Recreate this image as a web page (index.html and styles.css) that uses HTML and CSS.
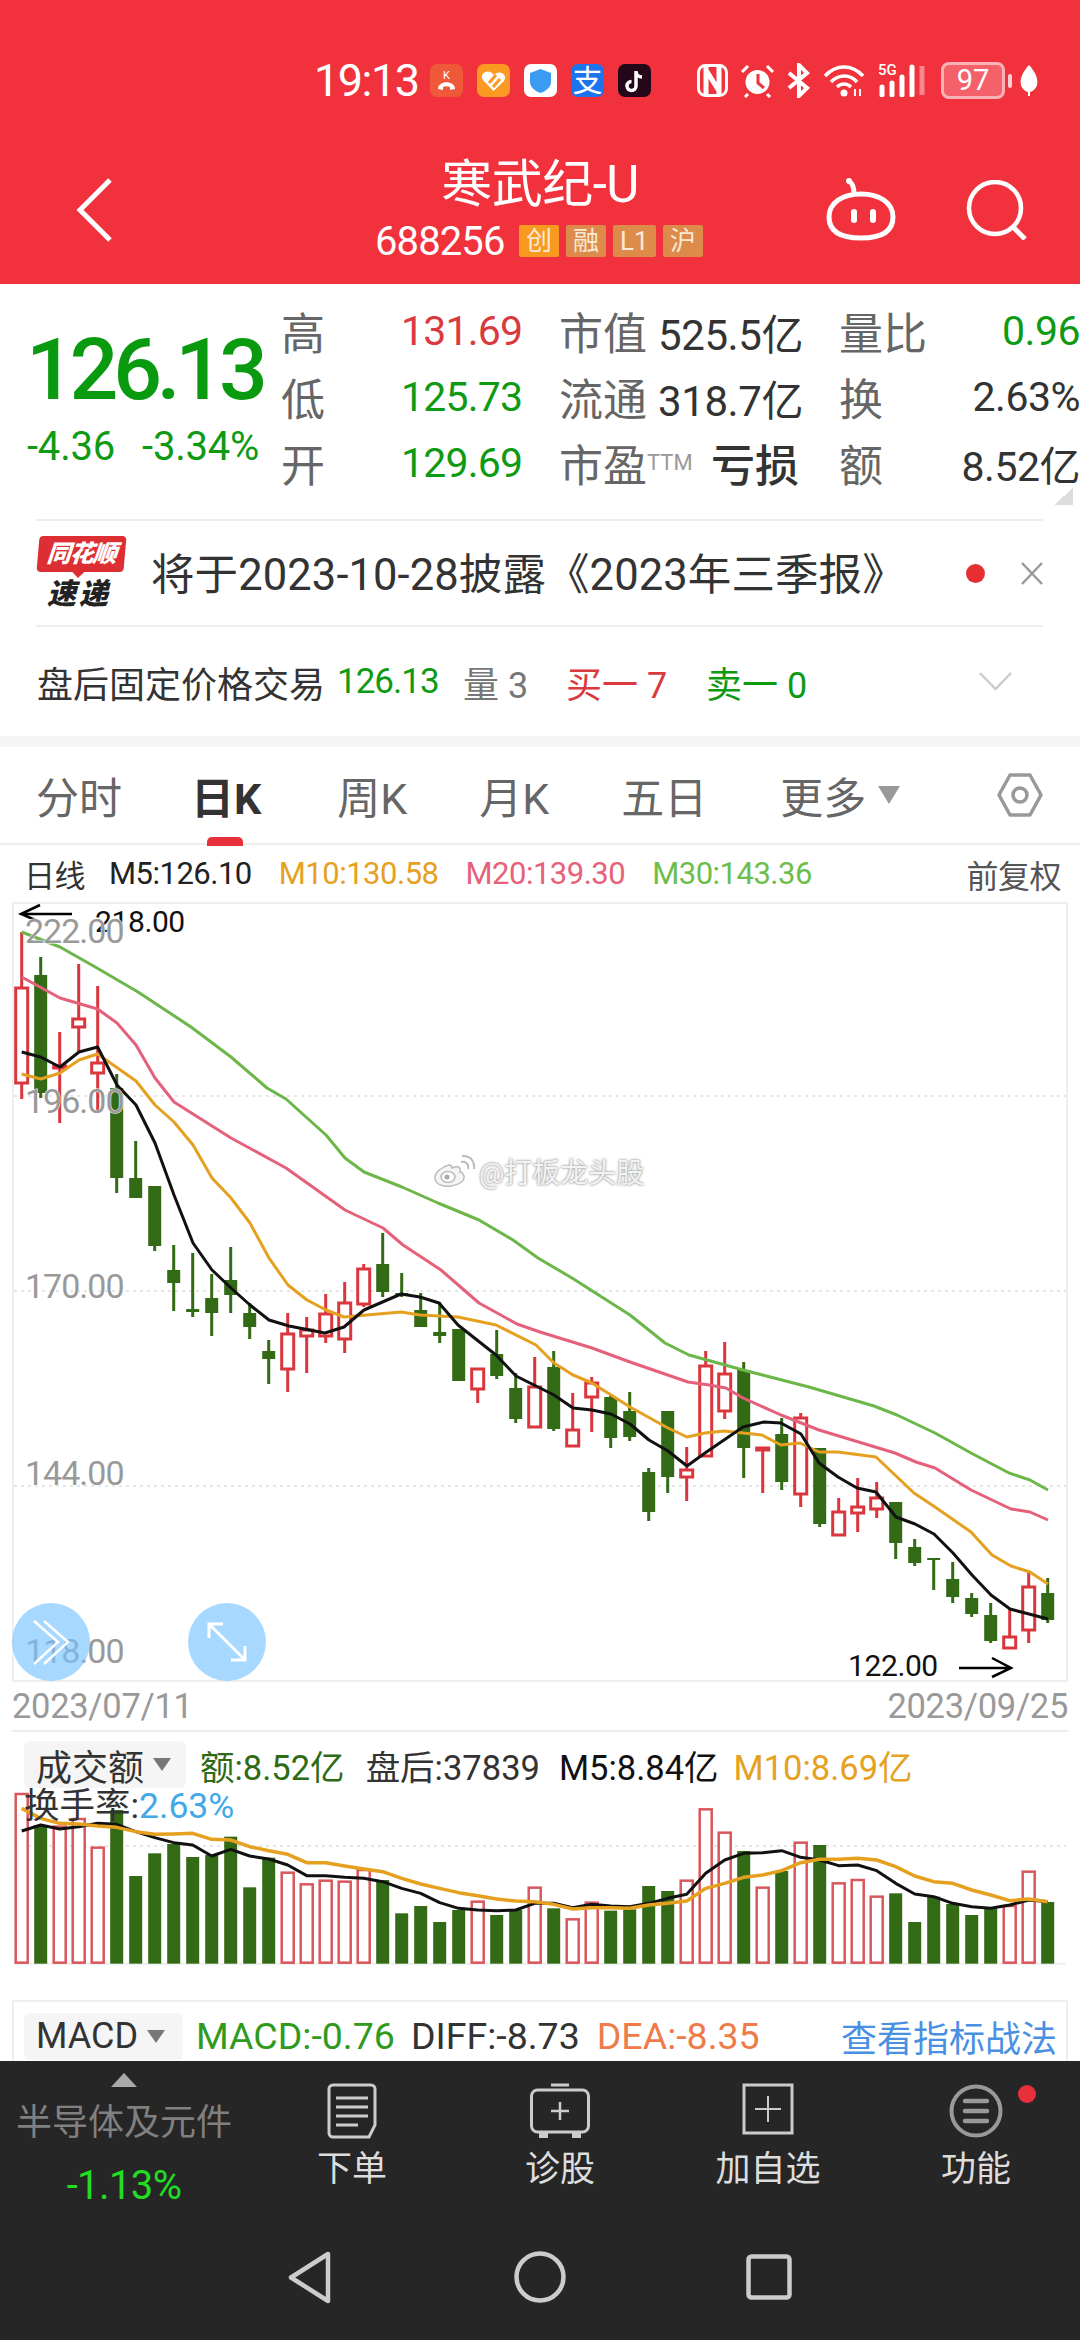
FILE: index.html
```html
<!DOCTYPE html>
<html lang="zh-CN">
<head>
  <meta charset="UTF-8">
  <title>寒武纪-U</title>
  <link rel="stylesheet" href="styles.css">
</head>
<body>
  <!-- 顶部红色区域 -->
  <header class="header">
    <div class="status-bar">
      <span class="clock">19:13</span>
      <div class="app-icons">
        <svg class="app-icon" viewBox="0 0 33 33"><rect width="33" height="33" rx="7" fill="#f0583a"/><path d="M8 25c0-9 17-9 17 0l-5 1v-3c-2-1-5-1-7 0v3z" fill="#fff"/><text x="16.5" y="15" class="app-k">K</text></svg>
        <svg class="app-icon" viewBox="0 0 33 33"><rect width="33" height="33" rx="7" fill="#fb9a22"/><path d="M16.5 27 6 16c-4-6 4-12 10-6l1 1c6-6 14 0 10 6z" fill="#fff"/><path d="m12 19 7-8M16 23l7-8" stroke="#fb9a22" stroke-width="3"/></svg>
        <svg class="app-icon" viewBox="0 0 33 33"><rect width="33" height="33" rx="7" fill="#fff"/><path d="M16.5 5 27 9v9c0 5-5 9-10.500 11C11 27 6 23 6 18V9z" fill="#3b9bf0"/></svg>
        <svg class="app-icon" viewBox="0 0 33 33"><rect width="33" height="33" rx="7" fill="#1c74ee"/><text x="16.500" y="27" class="app-zhi">支</text></svg>
        <svg class="app-icon" viewBox="0 0 33 33"><rect width="33" height="33" rx="7" fill="#26071a"/><path d="M18 7v15a4.500 4.500 0 1 1-4.500-4.500M18 8c.5 3 3 5 6 5" fill="none" stroke="#fff" stroke-width="3.500"/></svg>
      </div>
      <div class="sys-icons">
        <svg class="ic-nfc" viewBox="0 0 31 33"><rect x="1.500" y="1.500" width="28" height="30" rx="7" fill="none" stroke="#fff" stroke-width="3"/><path d="M9 2v29M22 2v29M9 6l13 21" stroke="#fff" stroke-width="5" fill="none"/></svg>
        <svg class="ic-alarm" viewBox="0 0 35 35"><circle cx="17.500" cy="19" r="12" fill="#fff"/><path d="M18 11v9l6 5" stroke="#f1323c" stroke-width="3" fill="none"/><path d="m2 9 6-6M33 9l-6-6M8 31l-3 3M27 31l3 3" stroke="#fff" stroke-width="3"/></svg>
        <svg class="ic-bt" viewBox="0 0 24 35"><path d="M2 10 20 25l-8 8V2l8 8L2 25" fill="none" stroke="#fff" stroke-width="4"/></svg>
        <svg class="ic-wifi" viewBox="0 0 43 33"><path d="M2 12c11-12 27-12 38 0M8 18c8-8 19-8 26 0M14 23c4-4 10-4 14 0" fill="none" stroke="#fff" stroke-width="3.500"/><circle cx="21" cy="29" r="3.500" fill="#fff"/><path d="M32 25v7M37 25v7" stroke="#fff" stroke-width="2"/></svg>
        <div class="signal">
          <span class="signal-5g">5G</span>
          <svg viewBox="0 0 48 33"><path d="M4 33v-8M14 33v-12M24 33v-18M34 33V5" stroke="#fff" stroke-width="5" stroke-linecap="round" transform="translate(0 -2)"/><path d="M44 31V2" stroke="#f7878c" stroke-width="5"/></svg>
        </div>
        <div class="battery"><span class="battery-level">97</span></div>
        <span class="battery-tip"></span>
        <svg class="ic-leaf" viewBox="0 0 20 33"><path d="M10 1c12 13 10 24 1 27v4H9v-4C0 25-2 14 10 1z" fill="#fff"/></svg>
      </div>
    </div>
    <div class="nav-bar">
      <svg class="ic-back" viewBox="0 0 37 66"><path d="M34 3 4 33l30 30" fill="none" stroke="#fff" stroke-width="5"/></svg>
      <div class="stock-name">
        <div class="stock-title">寒武纪-U</div>
        <div class="stock-sub">
          <span class="stock-code">688256</span>
          <span class="badge badge-main">创</span>
          <span class="badge">融</span>
          <span class="badge">L1</span>
          <span class="badge">沪</span>
        </div>
      </div>
      <svg class="ic-robot" viewBox="0 0 70 64"><path d="M28 17c0-6-1-10-4-12" fill="none" stroke="#fff" stroke-width="5"/><circle cx="23" cy="4" r="3" fill="#fff"/><path d="M35 17c19 0 32 9 32 23 0 14-10 21-32 21S3 54 3 40c0-14 13-23 32-23z" fill="none" stroke="#fff" stroke-width="5"/><rect x="25" y="32" width="6" height="14" rx="3" fill="#fff"/><rect x="44" y="32" width="6" height="14" rx="3" fill="#fff"/></svg>
      <svg class="ic-search" viewBox="0 0 62 60"><circle cx="29" cy="28" r="26" fill="none" stroke="#fff" stroke-width="4.500"/><path d="m46 46 13 13" stroke="#fff" stroke-width="5"/></svg>
    </div>
  </header>

  <!-- 行情 -->
  <section class="quote">
    <div class="price-col">
      <div class="price">126.13</div>
      <div class="change"><span>-4.36</span><span>-3.34%</span></div>
    </div>
    <div class="quote-grid">
      <span class="q-label">高</span><span class="q-num up">131.69</span>
      <span class="q-label">市值</span><span class="q-val">525.5亿</span>
      <span class="q-label">量比</span><span class="q-end down">0.96</span>
      <span class="q-label">低</span><span class="q-num down">125.73</span>
      <span class="q-label">流通</span><span class="q-val">318.7亿</span>
      <span class="q-label">换</span><span class="q-end">2.63%</span>
      <span class="q-label">开</span><span class="q-num down">129.69</span>
      <span class="q-label">市盈<sup class="ttm">TTM</sup></span><span class="q-val q-bold">亏损</span>
      <span class="q-label">额</span><span class="q-end">8.52亿</span>
    </div>
    <span class="corner"></span>
  </section>

  <section class="notice">
    <div class="brand">
      <div class="brand-top">同花顺</div>
      <div class="brand-bottom">速递</div>
    </div>
    <div class="notice-text">将于2023-10-28披露《2023年三季报》</div>
    <span class="notice-dot"></span>
    <svg class="ic-close" viewBox="0 0 22 23"><path d="m1 1 20 21M21 1 1 22" stroke="#999" stroke-width="2.500"/></svg>
  </section>

  <section class="after-hours">
    <span class="ah-title">盘后固定价格交易</span>
    <span class="ah-price down">126.13</span>
    <span class="ah-vol">量 3</span>
    <span class="ah-buy up">买一 7</span>
    <span class="ah-sell down">卖一 0</span>
    <svg class="ic-chevron" viewBox="0 0 33 19"><path d="m1 1 15.500 16L32 1" fill="none" stroke="#ccc" stroke-width="2.500"/></svg>
  </section>

  <div class="band"></div>

  <nav class="tabs">
    <span class="tab">分时</span>
    <span class="tab tab-active">日K</span>
    <span class="tab">周K</span>
    <span class="tab">月K</span>
    <span class="tab">五日</span>
    <span class="tab">更多</span>
    <span class="tab-arrow"></span>
    <svg class="ic-gear" viewBox="0 0 46 46"><path d="M13 3h20l11 20-11 20H13L2 23z" fill="none" stroke="#999" stroke-width="3.500" stroke-linejoin="round"/><circle cx="23" cy="23" r="7" fill="none" stroke="#999" stroke-width="3.500"/></svg>
  </nav>

  <div class="ma-row">
    <span class="ma-name">日线</span>
    <span class="ma5">M5:126.10</span>
    <span class="ma10">M10:130.58</span>
    <span class="ma20">M20:139.30</span>
    <span class="ma30">M30:143.36</span>
    <span class="ma-adjust">前复权</span>
  </div>

  <!-- K线 -->
  <section class="kline-box">
    <svg id="kline" viewBox="14 904 1052 776"></svg>
    <div class="watermark">
      <svg class="ic-weibo" viewBox="0 0 42 34"><path d="M16 11C8 13 1 19 2 25c1 6 9 8 16 7 8-1 14-5 13-10-1-3-3-4-4-4 1-4-1-6-5-5l-3 1c0-2-1-3-3-3z" fill="#f4f4f4" stroke="#bbb" stroke-width="1.500"/><ellipse cx="15" cy="23" rx="7" ry="5.500" fill="#fff" stroke="#bbb" stroke-width="1.500"/><circle cx="14" cy="23" r="2.500" fill="#aaa"/><path d="M28 8c5-1 8 2 7 7M29 2c8-1 13 5 12 13" fill="none" stroke="#bbb" stroke-width="2"/></svg>
      <span>@打板龙头股</span>
    </div>
    <span class="round-btn round-left">
      <svg viewBox="0 0 78 78"><path d="m22 18 24 21-24 22M32 18l24 21-24 22" fill="none" stroke="#fff" stroke-width="2.500"/></svg>
    </span>
    <span class="round-btn round-right">
      <svg viewBox="0 0 78 78"><path d="m22 22 34 34M21 35V21h14M57 43v14H43" fill="none" stroke="#fff" stroke-width="3"/></svg>
    </span>
  </section>

  <div class="dates">
    <span>2023/07/11</span>
    <span>2023/09/25</span>
  </div>

  <!-- 成交额 -->
  <section class="vol-box">
    <svg id="volume" viewBox="14 1732 1052 253"></svg>
    <div class="vol-legend">
      <div class="legend-row">
        <span class="picker">成交额<i class="picker-arrow"></i></span>
        <span class="vol-amount">额:8.52亿</span>
        <span class="vol-after">盘后:37839</span>
        <span class="vol-m5">M5:8.84亿</span>
        <span class="vol-m10">M10:8.69亿</span>
      </div>
      <div class="vol-rate">换手率:<span class="vol-rate-num">2.63%</span></div>
    </div>
  </section>

  <section class="macd-box">
    <span class="picker picker-macd">MACD<i class="picker-arrow"></i></span>
    <span class="macd-val">MACD:-0.76</span>
    <span class="macd-diff">DIFF:-8.73</span>
    <span class="macd-dea">DEA:-8.35</span>
    <span class="macd-link">查看指标战法</span>
  </section>

  <!-- 底部工具栏 -->
  <footer class="footer">
    <div class="toolbar">
      <div class="sector">
        <span class="sector-arrow"></span>
        <span class="sector-name">半导体及元件</span>
        <span class="sector-pct">-1.13%</span>
      </div>
      <div class="tool">
        <svg class="tool-icon" viewBox="0 0 60 56"><path d="M11 2h38a4 4 0 0 1 4 4v36l-6 12H11a4 4 0 0 1-4-4V6a4 4 0 0 1 4-4z" fill="none" stroke="#ccc" stroke-width="3"/><path d="M14 15h32M14 24h32M14 33h32M14 42h22" stroke="#ccc" stroke-width="3"/></svg>
        <span>下单</span>
      </div>
      <div class="tool">
        <svg class="tool-icon" viewBox="0 0 60 56"><path d="M21 2h18" stroke="#ccc" stroke-width="3"/><rect x="1.500" y="7" width="57" height="42" rx="6" fill="none" stroke="#ccc" stroke-width="3"/><path d="M30 19v18M21 28h18" stroke="#ccc" stroke-width="2.500"/><path d="M9 50v5h9v-5M42 50v5h9v-5" fill="#ccc"/></svg>
        <span>诊股</span>
      </div>
      <div class="tool">
        <svg class="tool-icon" viewBox="0 0 60 56"><rect x="6" y="2" width="48" height="48" fill="none" stroke="#ccc" stroke-width="3"/><path d="M30 13v26M17 26h26" stroke="#ccc" stroke-width="2"/></svg>
        <span>加自选</span>
      </div>
      <div class="tool">
        <svg class="tool-icon" viewBox="0 0 60 56"><circle cx="30" cy="28" r="24.500" fill="none" stroke="#999" stroke-width="4"/><path d="M19 18h22M19 28h22M19 38h22" stroke="#999" stroke-width="4.500" stroke-linecap="round"/></svg>
        <span>功能</span>
        <i class="tool-dot"></i>
      </div>
    </div>
    <div class="sys-nav">
      <svg class="nav-back" viewBox="0 0 45 53"><path d="M41 3 4 26.500 41 50z" fill="none" stroke="#ccc" stroke-width="4.500" stroke-linejoin="round"/></svg>
      <svg class="nav-home" viewBox="0 0 52 52"><circle cx="26" cy="26" r="23.500" fill="none" stroke="#ccc" stroke-width="4.500"/></svg>
      <svg class="nav-recent" viewBox="0 0 46 46"><rect x="2.500" y="2.500" width="41" height="41" rx="3" fill="none" stroke="#ccc" stroke-width="4.500"/></svg>
    </div>
  </footer>

  <script src="chart.js"></script>
</body>
</html>
```

FILE: styles.css
```css
* {
  box-sizing: border-box;
}

body {
  margin: 0;
  width: 1080px;
  height: 2340px;
  overflow: hidden;
  background: #fff;
  font-family: Roboto, "Noto Sans CJK SC", sans-serif;
  color: #333;
}

.up { color: #d93a40; }
.down { color: #0f9a14; }

/* header */
.header {
  height: 284px;
  background: #f1323c;
  color: #fff;
  padding-top: 62px;
}

.status-bar {
  display: flex;
  align-items: center;
  height: 37px;
  padding-left: 314px;
}

.clock {
  width: 116px;
  font-size: 45px;
  letter-spacing: -1.500px;
}

.app-icons {
  display: flex;
  gap: 14px;
}

.app-icon {
  width: 33px;
  height: 33px;
}

.app-k {
  font-size: 11px;
  fill: #fff;
  text-anchor: middle;
}

.app-zhi {
  font-size: 30px;
  fill: #fff;
  text-anchor: middle;
}

.sys-icons {
  display: flex;
  align-items: center;
  margin-left: 46px;
}

.ic-nfc { width: 31px; height: 33px; }
.ic-alarm { width: 35px; height: 35px; margin-left: 12px; }
.ic-bt { width: 24px; height: 35px; margin-left: 12px; }
.ic-wifi { width: 43px; height: 33px; margin-left: 12px; }

.signal {
  position: relative;
  width: 48px;
  height: 33px;
  margin-left: 12px;
}

.signal svg {
  display: block;
  width: 48px;
  height: 33px;
}

.signal-5g {
  position: absolute;
  left: 0;
  top: -3px;
  font-size: 15px;
  font-weight: 500;
  line-height: 18px;
}

.battery {
  width: 64px;
  height: 37px;
  margin-left: 15px;
  border: 3px solid #f9b3b6;
  border-radius: 8px;
  background: #f4616a;
  text-align: center;
  font-size: 29px;
  line-height: 31px;
}

.battery-tip {
  width: 4px;
  height: 14px;
  margin-left: 3px;
  background: #fbd0d2;
  border-radius: 2px;
}

.ic-leaf { width: 20px; height: 33px; margin-left: 7px; }

.nav-bar {
  position: relative;
  display: flex;
  height: 185px;
}

.ic-back {
  width: 37px;
  height: 66px;
  margin: 78px 0 0 76px;
}

.stock-name {
  position: absolute;
  left: 0;
  right: 0;
  top: 60px;
  text-align: center;
}

.stock-title {
  font-size: 51px;
  line-height: 52px;
  letter-spacing: -.5px;
}

.stock-sub {
  display: flex;
  align-items: center;
  height: 32px;
  margin-top: 14px;
  padding-left: 375px;
}

.stock-code {
  width: 144px;
  font-size: 40px;
  letter-spacing: -.9px;
  text-align: left;
}

.badge {
  display: block;
  height: 32px;
  min-width: 38px;
  padding: 0 7px;
  margin-right: 7px;
  background: #dc8b4b;
  border-radius: 2px;
  color: #fbe9d8;
  font-size: 26px;
  line-height: 32px;
  text-align: center;
}

.badge-main {
  background: #f89a1f;
}

.ic-robot {
  width: 70px;
  height: 64px;
  margin: 78px 0 0 713px;
}

.ic-search {
  width: 62px;
  height: 60px;
  margin: 81px 0 0 70px;
}

/* quote */
.quote {
  position: relative;
  display: flex;
  height: 235px;
}

.price-col {
  width: 281px;
  padding: 46px 0 0 26px;
}

.price {
  color: #0a9a10;
  font-size: 86px;
  line-height: 80px;
  font-weight: 500;
  letter-spacing: -5.300px;
}

.change {
  display: flex;
  gap: 27px;
  margin-top: 16px;
  margin-left: 1px;
  color: #0f9a14;
  font-size: 40px;
  line-height: 42px;
  letter-spacing: -.2px;
}

.quote-grid {
  display: grid;
  grid-template-columns: 120px 158px 99px 181px 85px 156px;
  grid-auto-rows: 66px;
  align-items: center;
  padding-top: 14px;
}

.q-label {
  color: #666;
  font-size: 44px;
  white-space: nowrap;
}

.q-num {
  font-size: 41px;
  letter-spacing: -.8px;
}

.q-val {
  padding-right: 40px;
  text-align: right;
  font-size: 42px;
  letter-spacing: -.4px;
  white-space: nowrap;
}

.q-bold {
  font-size: 44px;
  font-weight: 500;
  letter-spacing: 0;
}

.q-end {
  text-align: right;
  font-size: 41px;
  letter-spacing: -.5px;
  white-space: nowrap;
}

.ttm {
  color: #999;
  font-size: 22px;
  line-height: 0;
  vertical-align: 12px;
}

.corner {
  position: absolute;
  left: 1054px;
  top: 204px;
  width: 19px;
  height: 17px;
  background: linear-gradient(to bottom right, transparent 50%, #ddd 50%);
}

/* notice */
.notice {
  display: flex;
  align-items: center;
  height: 108px;
  margin: 0 37px 0 36px;
  border-top: 2px solid #eee;
  border-bottom: 2px solid #eee;
}

.brand {
  width: 115px;
  padding-left: 2px;
}

.brand-top {
  position: relative;
  width: 87px;
  height: 36px;
  background: #dd2f33;
  border-radius: 4px;
  transform: skewX(-5deg);
  color: #fff;
  font-size: 24px;
  font-style: italic;
  font-weight: 900;
  line-height: 36px;
  letter-spacing: -1px;
  text-align: center;
}

.brand-top::after {
  content: "";
  position: absolute;
  left: 36px;
  top: 36px;
  border: 6px solid transparent;
  border-top-color: #dd2f33;
}

.brand-bottom {
  margin: 5px 0 0 9px;
  color: #222;
  font-size: 29px;
  font-style: italic;
  font-weight: 900;
  line-height: 34px;
  letter-spacing: 3px;
}

.notice-text {
  width: 815px;
  margin-top: -4px;
  font-size: 43.500px;
  letter-spacing: .1px;
  white-space: nowrap;
}

.notice-dot {
  width: 19px;
  height: 19px;
  background: #e62e33;
  border-radius: 50%;
}

.ic-close {
  width: 22px;
  height: 23px;
  margin-left: 36px;
}

/* after hours */
.after-hours {
  display: flex;
  align-items: center;
  height: 109px;
  padding: 0 68px 0 37px;
  font-size: 36px;
  white-space: nowrap;
}

.ah-title { width: 300px; }
.ah-price { width: 126px; font-size: 35px; letter-spacing: -1px; }
.ah-vol { width: 103px; color: #777; }
.ah-buy { width: 140px; }
.ah-sell { width: 140px; }

.ic-chevron {
  width: 33px;
  height: 19px;
  margin-left: auto;
}

.band {
  height: 11px;
  background: #f5f5f5;
}

/* tabs */
.tabs {
  display: flex;
  align-items: center;
  height: 98px;
  padding: 0 37px 0 36px;
  border-bottom: 2px solid #eee;
  color: #666;
  font-size: 43px;
}

.tab {
  position: relative;
  margin-right: 72px;
  white-space: nowrap;
}

.tab:nth-of-type(1) { margin-right: 69px; }
.tab:nth-of-type(2) { margin-right: 76px; }
.tab:nth-of-type(5) { margin-right: 73px; }
.tab:nth-of-type(6) { margin-right: 12px; }

.tab-active {
  color: #333;
  font-weight: 700;
}

.tab-active::after {
  content: "";
  position: absolute;
  left: 16px;
  bottom: -20px;
  width: 36px;
  height: 9px;
  border-radius: 5px 5px 0 0;
  background: #e8303a;
}

.tab-arrow {
  border: 11px solid transparent;
  border-top: 18px solid #999;
  border-bottom: 0;
}

.ic-gear {
  width: 46px;
  height: 46px;
  margin-left: auto;
}

.ma-row {
  display: flex;
  align-items: center;
  gap: 27px;
  height: 57px;
  padding: 0 19px 0 24px;
  font-size: 31px;
  letter-spacing: -.5px;
  white-space: nowrap;
}

.ma5 { margin-left: -3px; color: #222; }
.ma10 { color: #e5a11f; }
.ma20 { color: #e8617a; }
.ma30 { color: #6dbd4b; }

.ma-adjust {
  margin-left: auto;
  color: #555;
  font-size: 32px;
}

/* charts */
.kline-box {
  position: relative;
  height: 780px;
  margin: 0 12px;
  border: 2px solid #eee;
}

.kline-box svg,
.vol-box > svg {
  display: block;
  width: 100%;
  height: 100%;
}

.kline-box > svg {
  overflow: visible;
}

.axis-label {
  fill: #999;
  font-size: 34px;
  letter-spacing: -1px;
  stroke: #fff;
  stroke-width: 1px;
  paint-order: stroke;
}

.price-mark {
  fill: #111;
  font-size: 30px;
  letter-spacing: -.4px;
}

.watermark {
  position: absolute;
  left: 419px;
  top: 247px;
  display: flex;
  align-items: center;
  gap: 4px;
  color: #f3f3f3;
  font-size: 28px;
  text-shadow: 0 0 2px #999, 0 0 3px #aaa;
  white-space: nowrap;
}

.watermark svg {
  width: 42px;
  height: 34px;
}

.round-btn {
  position: absolute;
  top: 699px;
  width: 78px;
  height: 78px;
  border-radius: 50%;
  background: rgba(120, 195, 255, .65);
}

.round-left { left: -2px; }
.round-right { left: 174px; }

.dates {
  display: flex;
  justify-content: space-between;
  align-items: center;
  height: 48px;
  padding: 0 12px;
  color: #999;
  font-size: 34.500px;
  letter-spacing: -.3px;
}

.vol-box {
  position: relative;
  height: 255px;
  margin: 0 12px 15px;
  border-top: 2px solid #eee;
}

.vol-legend {
  position: absolute;
  left: 12px;
  top: 9px;
}

.legend-row {
  display: flex;
  align-items: center;
  height: 47px;
  font-size: 34.500px;
  white-space: nowrap;
}

.picker {
  display: flex;
  align-items: center;
  width: 162px;
  height: 47px;
  padding-left: 12px;
  background: #f5f5f5;
  border-radius: 6px;
  color: #333;
  font-size: 36px;
  white-space: nowrap;
}

.picker-arrow {
  margin-left: 9px;
  border: 9px solid transparent;
  border-top: 13px solid #777;
  border-bottom: 0;
}

.vol-amount { margin-left: 14px; color: #2f6a14; }
.vol-after { margin-left: 21px; color: #333; }
.vol-m5 { margin-left: 19px; color: #111; }
.vol-m10 { margin-left: 15px; color: #e5a11f; }

.vol-rate {
  margin-top: -2px;
  color: #333;
  font-size: 35.500px;
  line-height: 40px;
}

.vol-rate-num { color: #41a9e8; }

.macd-box {
  display: flex;
  align-items: center;
  height: 61px;
  margin: 0 12px;
  padding: 9px 9px 0 10px;
  border: 2px solid #eee;
  border-width: 2px 2px 0;
  font-size: 37.500px;
  white-space: nowrap;
}

.picker-macd { width: 159px; flex: none; }
.macd-val { margin-left: 13px; color: #2f9a1e; }
.macd-diff { margin-left: 16px; color: #333; }
.macd-dea { margin-left: 17px; color: #ef7b4b; }

.macd-link {
  margin-left: auto;
  color: #4a90e2;
  font-size: 36px;
}

/* footer */
.footer {
  height: 279px;
  background: #262626;
}

.toolbar {
  display: grid;
  grid-template-columns: 248px repeat(4, 208px);
  height: 159px;
}

.sector {
  display: flex;
  flex-direction: column;
  align-items: center;
}

.sector-arrow {
  margin-top: 12px;
  border: 13px solid transparent;
  border-bottom: 14px solid #aaa;
  border-top: 0;
}

.sector-name {
  margin-top: 14px;
  color: #808080;
  font-size: 36px;
  line-height: 44px;
  white-space: nowrap;
}

.sector-pct {
  margin-top: 19px;
  color: #22dd22;
  font-size: 40px;
  line-height: 44px;
  letter-spacing: -.6px;
}

.tool {
  position: relative;
  display: flex;
  flex-direction: column;
  align-items: center;
  color: #ddd;
  font-size: 35px;
}

.tool-icon {
  width: 60px;
  height: 56px;
  margin-top: 22px;
}

.tool span {
  margin-top: 8px;
  line-height: 46px;
}

.tool-dot {
  position: absolute;
  left: 146px;
  top: 24px;
  width: 18px;
  height: 18px;
  background: #e8303a;
  border-radius: 50%;
}

.sys-nav {
  display: flex;
  align-items: center;
  height: 114px;
  padding-left: 287px;
}

.nav-back { width: 45px; height: 53px; }
.nav-home { width: 52px; height: 52px; margin-left: 182px; }
.nav-recent { width: 46px; height: 46px; margin-left: 180px; }
```

FILE: chart.js
```javascript
// K线数据: [涨跌, 最高, 最低, 实体上沿, 实体下沿] (都是页面 y 坐标)
var candles = [
  ['r',932,1099,988,1083],['g',957,1098,975,1093],['r',1032,1123,1066,1068],['r',964,1052,1019,1027],
  ['r',986,1110,1063,1073],['g',1074,1193,1088,1178],['g',1141,1198,1178,1198],['g',1186,1251,1186,1246],
  ['g',1245,1311,1270,1283],['g',1253,1317,1309,1312],['g',1274,1336,1298,1313],['g',1247,1313,1280,1295],
  ['g',1303,1339,1313,1327],['g',1340,1384,1351,1359],['r',1313,1392,1334,1369],['r',1317,1373,1330,1336],
  ['r',1294,1343,1314,1336],['r',1282,1353,1303,1339],['r',1264,1307,1269,1304],['g',1233,1297,1264,1292],
  ['g',1273,1297,1293,1295],['g',1293,1327,1310,1327],['g',1302,1343,1332,1336],['g',1329,1381,1329,1381],
  ['r',1369,1403,1369,1389],['g',1330,1379,1354,1376],['g',1373,1423,1388,1419],['r',1357,1428,1387,1427],
  ['g',1351,1431,1367,1429],['r',1393,1447,1430,1446],['r',1377,1432,1383,1397],['g',1395,1448,1397,1438],
  ['g',1392,1441,1411,1437],['g',1468,1521,1472,1512],['g',1411,1493,1411,1477],['r',1447,1501,1470,1477],
  ['r',1351,1457,1366,1456],['r',1342,1419,1374,1411],['g',1362,1478,1370,1448],['r',1448,1493,1448,1450],
  ['g',1418,1490,1434,1482],['r',1413,1507,1418,1494],['g',1448,1527,1448,1524],['r',1498,1535,1512,1535],
  ['r',1478,1532,1507,1513],['r',1482,1518,1498,1509],['g',1502,1559,1502,1543],['g',1539,1566,1547,1563],
  ['g',1558,1590,1558,1560],['g',1562,1603,1579,1597],['g',1593,1617,1598,1614],['g',1603,1643,1615,1641],
  ['r',1608,1648,1637,1648],['r',1573,1643,1587,1630],['g',1578,1623,1593,1620]
];

var ma30 = [[21.7,932],[60,947],[97,968],[138,992],[191,1027],[231,1057],[267,1088],[286,1099],[326,1135],[345,1158],[364,1172],[402,1187],[438,1203],[479,1220],[513,1240],[538,1258],[572,1278],[630,1315],[665,1343],[689,1355],[743,1370],[809,1387],[874,1406],[897,1415],[935,1433],[971,1453],[1009,1473],[1030,1480],[1048,1490]];
var ma20 = [[21.7,977],[60,998],[97.6,1009],[117,1023],[136,1045],[155,1078],[174,1102],[231,1138],[286,1168],[345,1210],[383,1228],[403,1245],[441,1270],[479,1303],[517,1324],[540,1332],[592,1348],[630,1362],[688,1382],[709,1385],[726,1388],[743,1398],[781,1415],[819,1430],[895,1453],[916,1462],[935,1468],[971,1490],[1011,1509],[1030,1512],[1048,1520]];
var ma10 = [[21.7,1074],[40.7,1079],[60,1073],[79,1060],[97.6,1054],[136,1081],[155,1105],[174,1122],[193,1145],[212,1178],[231,1198],[250,1223],[269,1258],[288,1285],[307,1300],[326,1310],[344,1317],[401,1312],[420,1315],[458,1317],[496,1325],[536,1345],[554,1363],[573,1375],[592,1383],[630,1407],[668,1428],[687,1437],[705,1433],[724,1431],[762,1435],[781,1445],[800,1443],[819,1452],[838,1452],[876,1457],[914,1493],[935,1507],[971,1532],[992,1555],[1011,1566],[1030,1572],[1048,1584]];
var ma5 = [[21.7,1052],[40.7,1057],[60,1067],[79,1052],[97.6,1047],[117,1085],[136,1105],[155,1143],[174,1195],[193,1243],[212,1270],[231,1288],[250,1305],[269,1320],[289,1326],[325,1333],[344,1327],[364,1310],[401,1294],[420,1297],[439,1303],[458,1325],[496,1355],[516,1376],[554,1395],[573,1408],[592,1410],[611,1414],[630,1424],[649,1440],[668,1451],[687,1466],[705,1453],[724,1440],[743,1427],[764,1422],[781,1423],[801,1434],[819,1463],[838,1477],[857,1488],[876,1492],[896,1517],[915,1524],[934,1534],[953,1553],[972,1575],[991,1595],[1010,1609],[1029,1614],[1048,1619]];

// 成交额柱子的顶部 y (放大图读数, 换算见 volY)
var bars = [222,315,320,297,383,270,468,400,372,411,405,350,502,413,458,493,482,485,450,480,580,558,606,570,545,585,570,503,565,598,548,572,568,498,513,482,268,338,393,503,453,368,375,490,480,530,520,606,530,552,585,565,558,455,546];
var volBlack = [333,315,327,320,310,313,335,353,368,375,408,388,408,417,435,467,467,472,475,485,505,520,548,565,570,572,570,550,550,563,553,558,560,550,535,523,460,420,400,398,392,412,420,437,435,452,490,522,530,550,560,565,555,540,545];
var volOrange = [265,295,310,312,318,322,335,343,342,340,358,360,380,392,403,428,428,438,447,455,475,492,505,518,527,537,543,545,553,567,563,563,565,555,550,543,505,490,472,465,452,428,418,418,415,420,440,468,485,490,510,525,542,537,545];

var RED = '#d9363e', GREEN = '#336a16';

function candleX(i) {
  return 21.7 + 19 * i;
}

function volY(v) {
  return 1720 + v / 3;
}

function polyline(points, color, width) {
  return '<polyline fill="none" stroke-linejoin="round" stroke="' + color + '" stroke-width="' + width +
    '" points="' + points.map(function (p) { return p.join(','); }).join(' ') + '"/>';
}

function hline(y) {
  return '<path d="M14 ' + y + 'H1066" stroke="#e6e6e6" stroke-width="2" stroke-dasharray="3 4"/>';
}

function drawCandle(c, i) {
  var x = candleX(i), color = c[0] == 'r' ? RED : GREEN;
  var wick = 'M' + x + ' ' + c[1] + 'V' + c[3] + 'M' + x + ' ' + c[4] + 'V' + c[2];
  var out = '<path d="' + wick + '" stroke="' + color + '" stroke-width="3"/>';
  if (c[0] == 'r') {
    out += '<rect x="' + (x - 6) + '" y="' + c[3] + '" width="12" height="' + Math.max(c[4] - c[3], 2) +
      '" fill="#fff" stroke="' + color + '" stroke-width="3"/>';
  } else {
    out += '<rect x="' + (x - 6.5) + '" y="' + c[3] + '" width="13" height="' + Math.max(c[4] - c[3], 2) +
      '" fill="' + color + '"/>';
  }
  return out;
}

function drawKline() {
  var html = hline(1096) + hline(1291) + hline(1486);
  html += candles.map(drawCandle).join('');
  html += polyline(ma30, '#6cb64a', 3) + polyline(ma20, '#e5607a', 3) + polyline(ma10, '#e5a020', 3) + polyline(ma5, '#111', 3);

  // 最高最低价标记
  html += '<path d="M72 914H22M40 905l-19 9 19 8" fill="none" stroke="#000" stroke-width="2.5"/>';
  html += '<text class="price-mark" x="95" y="932">218.00</text>';
  html += '<path d="M959 1668H1010M992 1658l19 10-19 9" fill="none" stroke="#000" stroke-width="2.5"/>';
  html += '<text class="price-mark" x="848" y="1676">122.00</text>';

  [['222.00', 943], ['196.00', 1113], ['170.00', 1298], ['144.00', 1485], ['118.00', 1663]].forEach(function (a) {
    html += '<text class="axis-label" x="25" y="' + a[1] + '">' + a[0] + '</text>';
  });
  document.getElementById('kline').innerHTML = html;
}

function drawVolume() {
  var base = volY(728);
  var html = '<path d="M14 ' + (base + 1) + 'H1066" stroke="#eee" stroke-width="2"/>' + hline(volY(378));
  bars.forEach(function (top, i) {
    var x = candleX(i), y = volY(top);
    if (candles[i][0] == 'r') {
      html += '<rect x="' + (x - 6) + '" y="' + y + '" width="12" height="' + (base - y) + '" fill="#fff" stroke="#d9575c" stroke-width="2.5"/>';
    } else {
      html += '<rect x="' + (x - 6.5) + '" y="' + y + '" width="13" height="' + (base - y + 1) + '" fill="' + GREEN + '"/>';
    }
  });
  function toPoints(list) {
    return list.map(function (v, i) { return [candleX(i), volY(v)]; });
  }
  html += polyline(toPoints(volBlack), '#111', 3) + polyline(toPoints(volOrange), '#e5a020', 3.5);
  document.getElementById('volume').innerHTML = html;
}

drawKline();
drawVolume();
```
